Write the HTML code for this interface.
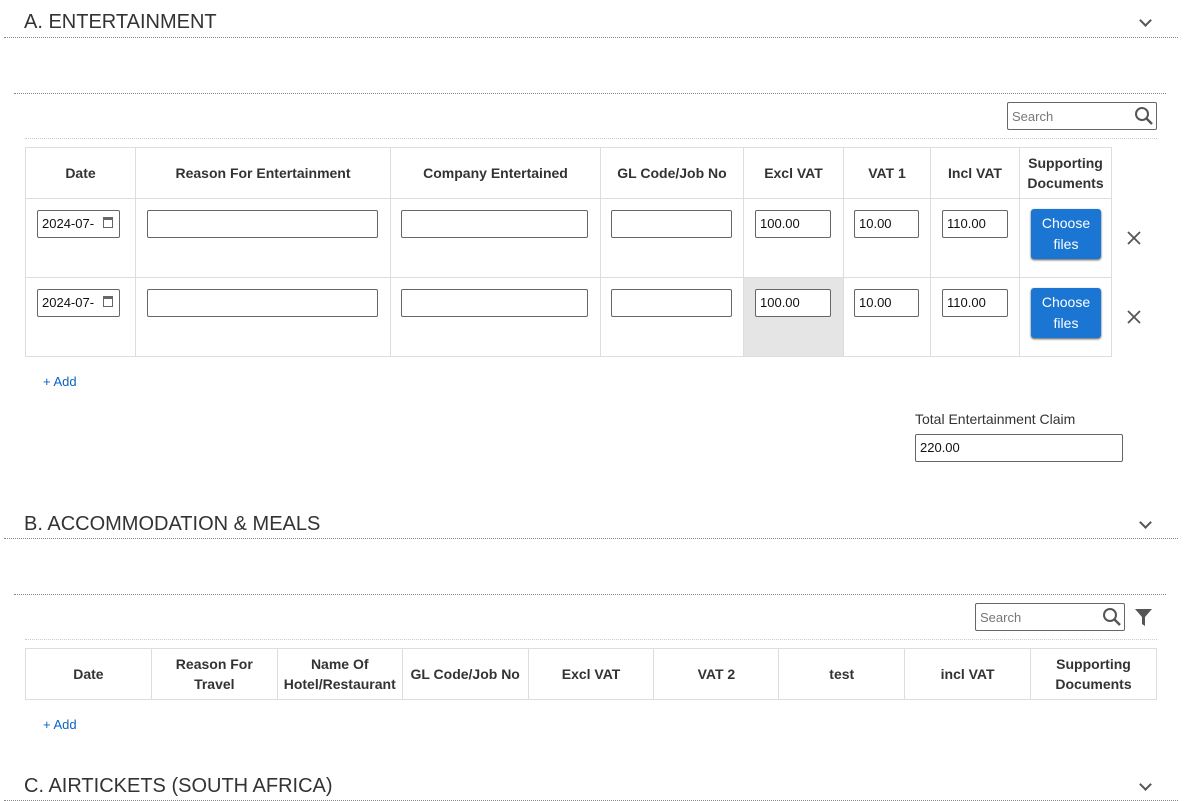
<!DOCTYPE html>
<html><head><meta charset="utf-8"><style>
*{box-sizing:border-box;margin:0;padding:0}
body{width:1187px;height:801px;background:#fff;position:relative;overflow:hidden;font-family:"Liberation Sans",sans-serif;color:#333}
.a{position:absolute}
.h{font-size:20px;color:#333;left:24px}
.dl{position:absolute;border-top:1px dotted #888;height:0}
.ll{position:absolute;border-top:1px dotted #ccc;height:0}
.chev{position:absolute;width:9px;height:9px;border-right:2px solid #555;border-bottom:2px solid #555;transform:rotate(45deg)}
table{position:absolute;border-collapse:collapse;font-size:14px}
td,th{border:1px solid #ddd;text-align:center;font-weight:bold;color:#333;padding:0;line-height:20px;font-size:14px}
td{font-weight:normal;vertical-align:top}
.in{position:absolute;border:1px solid #666;border-radius:2px;background:#fff;height:28px;font-size:13px;padding:6px 4px;line-height:14px;color:#111}
.btn{position:absolute;background:#1a76d2;color:#fff;border-radius:3px;width:70px;height:50px;font-size:14px;line-height:21px;text-align:center;padding-top:4px;box-shadow:0 1px 2px #555}
.x{position:absolute}
.add{position:absolute;left:43px;font-size:13px;color:#0b63c5}
.srch{position:absolute;border:1px solid #666;border-radius:2px;height:28px;width:150px;font-size:13px;color:#777;padding:6px 4px}
</style></head><body>

<div class="a h" style="top:11px">A. ENTERTAINMENT</div>
<div class="chev" style="left:1141px;top:16px"></div>
<div class="dl" style="left:4px;width:1174px;top:37px"></div>
<div class="dl" style="left:14px;width:1152px;top:93px"></div>
<div class="srch" style="left:1007px;top:102px">Search
<svg class="a" style="right:2px;top:3px" width="20" height="20" viewBox="0 0 20 20"><circle cx="8" cy="8" r="6" fill="none" stroke="#555" stroke-width="2"/><path d="M12.5 12.5L18 18" stroke="#555" stroke-width="2.4"/></svg></div>
<div class="ll" style="left:25px;width:1132px;top:138px"></div>

<table style="left:25px;top:147px;width:1087px">
<tr style="height:51px"><th style="width:110px">Date</th><th style="width:255px">Reason For Entertainment</th><th style="width:210px">Company Entertained</th><th style="width:143px">GL Code/Job No</th><th style="width:100px">Excl VAT</th><th style="width:87px">VAT 1</th><th style="width:89px">Incl VAT</th><th style="width:92px">Supporting<br>Documents</th></tr>
<tr style="height:79px"><td></td><td></td><td></td><td></td><td></td><td></td><td></td><td></td></tr>
<tr style="height:79px"><td></td><td></td><td></td><td></td><td style="background:#e5e5e5"></td><td></td><td></td><td></td></tr>
</table>

<div class="in" style="left:37px;top:210px;width:83px">2024-07-<span class="a" style="right:6px;top:6px;width:10px;height:11px;border:1.5px solid #666;border-top-width:3px"></span></div>
<div class="in" style="left:147px;top:210px;width:231px"></div>
<div class="in" style="left:401px;top:210px;width:187px"></div>
<div class="in" style="left:611px;top:210px;width:121px"></div>
<div class="in" style="left:755px;top:210px;width:76px">100.00</div>
<div class="in" style="left:854px;top:210px;width:65px">10.00</div>
<div class="in" style="left:942px;top:210px;width:66px">110.00</div>
<div class="btn" style="left:1031px;top:209px">Choose<br>files</div>
<svg class="x" style="left:1127px;top:231px" width="14" height="14" viewBox="0 0 14 14"><path d="M1 1L13 13M13 1L1 13" stroke="#555" stroke-width="1.8"/></svg>

<div class="in" style="left:37px;top:289px;width:83px">2024-07-<span class="a" style="right:6px;top:6px;width:10px;height:11px;border:1.5px solid #666;border-top-width:3px"></span></div>
<div class="in" style="left:147px;top:289px;width:231px"></div>
<div class="in" style="left:401px;top:289px;width:187px"></div>
<div class="in" style="left:611px;top:289px;width:121px"></div>
<div class="in" style="left:755px;top:289px;width:76px">100.00</div>
<div class="in" style="left:854px;top:289px;width:65px">10.00</div>
<div class="in" style="left:942px;top:289px;width:66px">110.00</div>
<div class="btn" style="left:1031px;top:288px">Choose<br>files</div>
<svg class="x" style="left:1127px;top:310px" width="14" height="14" viewBox="0 0 14 14"><path d="M1 1L13 13M13 1L1 13" stroke="#555" stroke-width="1.8"/></svg>

<div class="add" style="top:374px">+ Add</div>
<div class="a" style="left:915px;top:411px;font-size:14px">Total Entertainment Claim</div>
<div class="in" style="left:915px;top:434px;width:208px">220.00</div>

<div class="a h" style="top:513px">B. ACCOMMODATION &amp; MEALS</div>
<div class="chev" style="left:1141px;top:518px"></div>
<div class="dl" style="left:4px;width:1174px;top:538px"></div>
<div class="dl" style="left:14px;width:1152px;top:594px"></div>
<div class="srch" style="left:975px;top:603px">Search
<svg class="a" style="right:2px;top:3px" width="20" height="20" viewBox="0 0 20 20"><circle cx="8" cy="8" r="6" fill="none" stroke="#555" stroke-width="2"/><path d="M12.5 12.5L18 18" stroke="#555" stroke-width="2.4"/></svg></div>
<svg class="a" style="left:1135px;top:609px" width="17" height="17" viewBox="0 0 17 17"><path d="M0 0H17L10 8V17L7 15V8Z" fill="#555"/></svg>
<div class="ll" style="left:25px;width:1132px;top:639px"></div>

<table style="left:25px;top:648px;width:1132px">
<tr style="height:51px"><th style="width:126px">Date</th><th style="width:126px">Reason For<br>Travel</th><th style="width:125px">Name Of<br>Hotel/Restaurant</th><th style="width:126px">GL Code/Job No</th><th style="width:126px">Excl VAT</th><th style="width:125px">VAT 2</th><th style="width:126px">test</th><th style="width:126px">incl VAT</th><th style="width:126px">Supporting<br>Documents</th></tr>
</table>
<div class="add" style="top:717px">+ Add</div>

<div class="a h" style="top:775px">C. AIRTICKETS (SOUTH AFRICA)</div>
<div class="chev" style="left:1141px;top:780px"></div>
<div class="dl" style="left:4px;width:1174px;top:800px"></div>
</body></html>
